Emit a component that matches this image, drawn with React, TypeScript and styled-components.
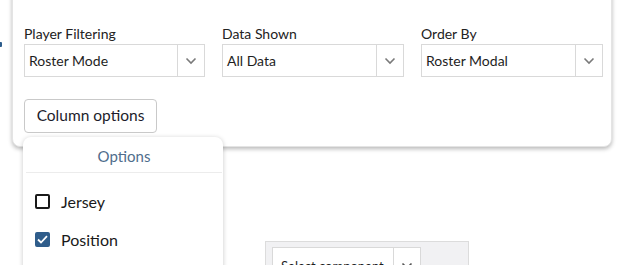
import React from "react";
import styled, { createGlobalStyle } from "styled-components";

const Global = createGlobalStyle`
  html, body { margin: 0; padding: 0; background: #fff; overflow: hidden; }
  body { font-family: Lato, "Open Sans", sans-serif; color: #222; }
  * { box-sizing: border-box; }
`;

const Page = styled.div`
  width: 620px;
  height: 265px;
  position: relative;
  overflow: hidden;
`;

const EdgeMark = styled.div`
  position: absolute;
  left: 0;
  top: 42px;
  width: 2px;
  height: 5px;
  background: #2d5d8c;
  border-radius: 0 1px 1px 0;
`;

const Card = styled.div`
  margin: -20px 0 0 12px;
  width: 600px;
  padding: 44px 10px 13px 11px;
  background: #fff;
  border: 1px solid #e4e4e4;
  border-radius: 8px;
  box-shadow: 0 2px 4px rgba(0, 0, 0, 0.28);
  position: relative;
`;

const FilterRow = styled.div`
  display: grid;
  grid-template-columns: 181px 182px 182px;
  column-gap: 17px;
`;

const Field = styled.div`
  display: flex;
  flex-direction: column;
  gap: 2px;
`;

const Label = styled.label`
  font-size: 14px;
  line-height: 17px;
  color: #222;
`;

const SelectBox = styled.div<{ $w?: number; $h?: number }>`
  display: flex;
  height: ${(p) => p.$h ?? 33}px;
  border: 1px solid #d9d9d9;
  background: #fff;
  ${(p) => (p.$w ? `width: ${p.$w}px;` : "")}
`;

const SelectValue = styled.div<{ $size?: number; $pad?: number }>`
  flex: 1;
  display: flex;
  align-items: center;
  padding-left: ${(p) => p.$pad ?? 4}px;
  font-size: ${(p) => p.$size ?? 14}px;
  color: #1e1e1e;
  white-space: nowrap;
  overflow: hidden;
`;

const Caret = styled.div`
  width: 27px;
  border-left: 1px solid #d9d9d9;
  display: flex;
  align-items: center;
  justify-content: center;
`;

const ButtonWrap = styled.div`
  margin-top: 22px;
  position: relative;
  width: 133px;
`;

const Button = styled.button`
  width: 133px;
  height: 34px;
  border: 1px solid #c9c9c9;
  border-radius: 4px;
  background: #fff;
  font-family: Lato, sans-serif;
  font-size: 15.5px;
  color: #1c1c2a;
  padding: 0 0 2px;
  cursor: pointer;
`;

const Menu = styled.div`
  position: absolute;
  left: -1px;
  top: 38px;
  width: 200px;
  height: 160px;
  background: #fff;
  border-radius: 8px;
  box-shadow: 0 1px 5px rgba(0, 0, 0, 0.22);
  z-index: 5;
`;

const MenuHeader = styled.div`
  height: 36px;
  display: flex;
  align-items: center;
  justify-content: center;
  padding-top: 2px;
  font-size: 15px;
  color: #4f6d8c;
  margin: 0 1px 0 3px;
  border-bottom: 1px solid #ececec;
`;

const MenuList = styled.div`
  padding-top: 17px;
  display: flex;
  flex-direction: column;
  gap: 16px;
`;

const MenuItem = styled.div`
  display: flex;
  align-items: center;
  height: 22px;
  padding-left: 12px;
  gap: 11px;
  font-size: 16px;
  color: #1a1a1a;
`;

const Check = styled.span<{ $on?: boolean }>`
  width: 15px;
  height: 15px;
  border-radius: 2px;
  border: 2px solid ${(p) => (p.$on ? "#2f5d8b" : "#1a1a1a")};
  background: ${(p) => (p.$on ? "#2f5d8b" : "#fff")};
  display: flex;
  align-items: center;
  justify-content: center;
`;

const Lower = styled.div`
  margin: 94px 0 0 265px;
  width: 204px;
  height: 50px;
  background: #f1f1f3;
  border: 1px solid #dcdcdc;
  padding: 5px 0 0 6px;
`;

const Chevron = ({ color = "#7a7a7a" }: { color?: string }) => (
  <svg width="12" height="8" viewBox="0 0 12 8" fill="none">
    <path d="M1.5 1.5 L6 6 L10.5 1.5" stroke={color} strokeWidth="1.6" />
  </svg>
);

const Select = ({ value }: { value: string }) => (
  <SelectBox>
    <SelectValue>{value}</SelectValue>
    <Caret>
      <Chevron />
    </Caret>
  </SelectBox>
);

export default function App() {
  const fields = [
    { label: "Player Filtering", value: "Roster Mode" },
    { label: "Data Shown", value: "All Data" },
    { label: "Order By", value: "Roster Modal" },
  ];
  return (
    <Page>
      <Global />
      <EdgeMark />
      <Card>
        <FilterRow>
          {fields.map((f) => (
            <Field key={f.label}>
              <Label>{f.label}</Label>
              <Select value={f.value} />
            </Field>
          ))}
        </FilterRow>
        <ButtonWrap>
          <Button>Column options</Button>
          <Menu>
            <MenuHeader>Options</MenuHeader>
            <MenuList>
              <MenuItem>
                <Check />
                Jersey
              </MenuItem>
              <MenuItem>
                <Check $on>
                  <svg width="11" height="9" viewBox="0 0 11 9" fill="none">
                    <path d="M1 4.5 L4 7.5 L10 1.2" stroke="#fff" strokeWidth="1.8" />
                  </svg>
                </Check>
                Position
              </MenuItem>
            </MenuList>
          </Menu>
        </ButtonWrap>
      </Card>
      <Lower>
        <SelectBox $w={149} $h={37}>
          <SelectValue $size={13} $pad={8}>Select component</SelectValue>
          <Caret>
            <Chevron color="#555" />
          </Caret>
        </SelectBox>
      </Lower>
    </Page>
  );
}
